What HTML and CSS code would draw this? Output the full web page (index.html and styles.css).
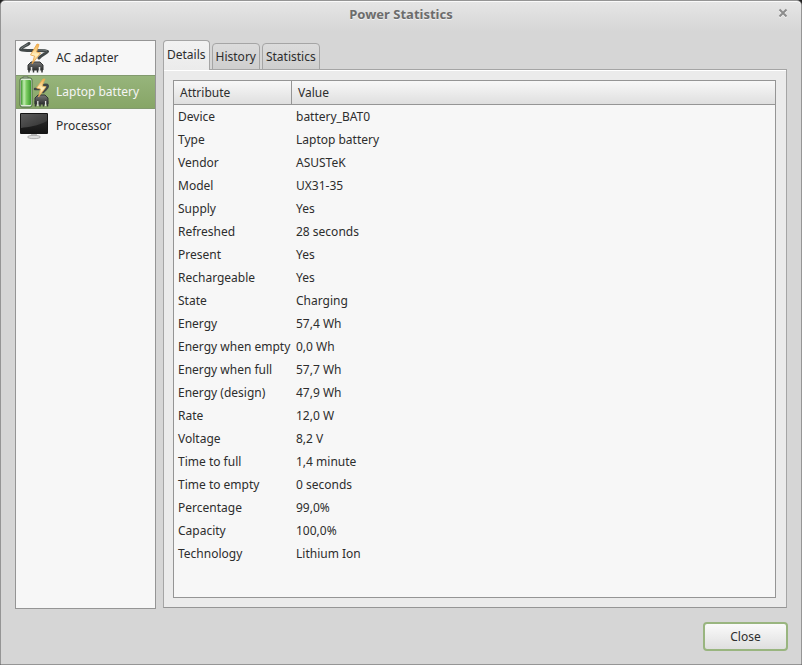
FILE: index.html
```html
<!DOCTYPE html>
<html lang="en">
<head>
<meta charset="utf-8">
<title>Power Statistics</title>
<link rel="stylesheet" href="styles.css">
</head>
<body>
<svg class="defs" aria-hidden="true">
  <defs>
    <linearGradient id="bolt" x1="0" y1="0" x2="0" y2="1"><stop offset="0" stop-color="#f3ae48"/><stop offset=".55" stop-color="#fff0c0"/><stop offset="1" stop-color="#f0a840"/></linearGradient>
    <linearGradient id="plug" x1="0" y1="0" x2="0" y2="1"><stop offset="0" stop-color="#777"/><stop offset="1" stop-color="#303232"/></linearGradient>
    <linearGradient id="cell" x1="0" y1="0" x2="1" y2="0"><stop offset="0" stop-color="#3f9a30"/><stop offset=".3" stop-color="#c0ecae"/><stop offset=".55" stop-color="#7ccb62"/><stop offset="1" stop-color="#3b9a2c"/></linearGradient>
    <linearGradient id="screen" x1="0" y1="0" x2="0" y2="1"><stop offset="0" stop-color="#303030"/><stop offset="1" stop-color="#151515"/></linearGradient>
    <linearGradient id="glare" x1="0" y1="0" x2="1" y2="1"><stop offset="0" stop-color="#5c5c5c"/><stop offset="1" stop-color="#303030"/></linearGradient>
  </defs>
</svg>
<main class="window">
  <header class="titlebar">
    <h1 class="title">Power Statistics</h1>
    <button class="window-close" type="button" aria-label="Close window">
      <svg width="10" height="10" viewBox="0 0 10 10"><path class="cross-light" d="M1.5 2.5l7 7m0-7l-7 7"/><path class="cross" d="M1.5 1.5l7 7m0-7l-7 7"/></svg>
    </button>
  </header>
  <div class="content">
    <nav class="devices" aria-label="Devices">
      <button class="device" type="button">
        <svg class="icon" viewBox="0 0 32 32">
          <path d="M11 1.5C8 4 3 5 2.500 7.500C7 9 12 8.500 17 8.500S27 8 29.500 9.500C28 12 24 12.500 21 16" fill="none" stroke="#434949" stroke-width="3" stroke-linecap="round" stroke-linejoin="round"/>
          <path d="M10 2C7 4 4 5 3 7M19 8c4 0 8 0 10 1" fill="none" stroke="#7f8686" stroke-width=".8"/>
          <path d="M10 23l3-3h9l3 3v5H10z" fill="url(#plug)" stroke="#343737"/>
          <path d="M11 26v4.500m4.500-4v4m4-4v4M24 26v4.500" fill="none" stroke="#343737" stroke-width="1.500"/>
          <path d="M13.500 25v4.500m8-4.500v4.500" stroke="#e2e2e2" stroke-width="1.500"/>
          <path d="M19 2l-6.500 11 4 1-2.500 8L22.500 11l-4-1L21 2.500z" fill="url(#bolt)" stroke="#e9a345" stroke-width=".8"/>
        </svg>
        <span>AC adapter</span>
      </button>
      <button class="device selected" type="button" aria-current="true">
        <svg class="icon" viewBox="0 0 32 32">
          <path d="M5 3V.8h5V3" fill="#e2ebdd" stroke="#5d6b55" stroke-width=".8"/>
          <rect x="2" y="2" width="12" height="29" rx="2" fill="#dcebd5" stroke="#4d6644"/>
          <rect x="3" y="4" width="10" height="25" rx="1" fill="url(#cell)"/>
          <path d="M26 9c4-1 5 1 2 4l-3 3M17 13h5" fill="none" stroke="#424747" stroke-width="2.500" stroke-linecap="round"/>
          <path d="M17 22l3-3h7l3 3v6H17z" fill="url(#plug)" stroke="#343737"/>
          <path d="M17.500 25v5.500m4.500-4v4m3.500-4v4m4-5.500v5.500" fill="none" stroke="#343737" stroke-width="1.500"/>
          <path d="M19.800 25v5m7.800-5v5" stroke="#e2e2e2" stroke-width="1.300"/>
          <path d="M25 3l-6.500 9 4 1-2 8 7.500-10-4-1 3-7z" fill="url(#bolt)" stroke="#e7ad58" stroke-width=".8"/>
        </svg>
        <span>Laptop battery</span>
      </button>
      <button class="device" type="button">
        <svg class="icon" viewBox="0 0 32 32">
          <path d="M13 24h6v3h-6z" fill="#bbb"/>
          <ellipse cx="16" cy="27" rx="6.500" ry="1.700" fill="#ddd" stroke="#999" stroke-width=".7"/>
          <rect x="2" y="3" width="28" height="21" rx="1" fill="#151515"/>
          <rect x="3" y="4" width="26" height="19" fill="url(#screen)"/>
          <path d="M3 4h26v7C20 16 10 17 3 18z" fill="url(#glare)"/>
        </svg>
        <span>Processor</span>
      </button>
    </nav>
    <section class="notebook">
      <div class="tabs" role="tablist">
        <button class="tab active" type="button" role="tab" aria-selected="true">Details</button>
        <button class="tab" type="button" role="tab" aria-selected="false">History</button>
        <button class="tab" type="button" role="tab" aria-selected="false">Statistics</button>
      </div>
      <div class="panel" role="tabpanel">
        <div class="table-frame">
          <table class="details">
            <thead><tr><th scope="col" class="attribute">Attribute</th><th scope="col">Value</th></tr></thead>
            <tbody>
              <tr><td>Device</td><td>battery_BAT0</td></tr>
              <tr><td>Type</td><td>Laptop battery</td></tr>
              <tr><td>Vendor</td><td>ASUSTeK</td></tr>
              <tr><td>Model</td><td>UX31-35</td></tr>
              <tr><td>Supply</td><td>Yes</td></tr>
              <tr><td>Refreshed</td><td>28 seconds</td></tr>
              <tr><td>Present</td><td>Yes</td></tr>
              <tr><td>Rechargeable</td><td>Yes</td></tr>
              <tr><td>State</td><td>Charging</td></tr>
              <tr><td>Energy</td><td>57,4 Wh</td></tr>
              <tr><td>Energy when empty</td><td>0,0 Wh</td></tr>
              <tr><td>Energy when full</td><td>57,7 Wh</td></tr>
              <tr><td>Energy (design)</td><td>47,9 Wh</td></tr>
              <tr><td>Rate</td><td>12,0 W</td></tr>
              <tr><td>Voltage</td><td>8,2 V</td></tr>
              <tr><td>Time to full</td><td>1,4 minute</td></tr>
              <tr><td>Time to empty</td><td>0 seconds</td></tr>
              <tr><td>Percentage</td><td>99,0%</td></tr>
              <tr><td>Capacity</td><td>100,0%</td></tr>
              <tr><td>Technology</td><td>Lithium Ion</td></tr>
            </tbody>
          </table>
        </div>
      </div>
    </section>
  </div>
  <footer class="actions"><button class="close" type="button">Close</button></footer>
</main>
</body>
</html>
```
FILE: styles.css
```css
* { box-sizing: border-box; }

body {
  margin: 0;
  background: #222;
  color: #2d2d2d;
  font: 12px/22px "Noto Sans", sans-serif;
}

button {
  margin: 0;
  padding: 0;
  border: 0;
  background: none;
  color: inherit;
  font: inherit;
}

.defs { position: absolute; width: 0; height: 0; }

.window {
  display: flex;
  flex-direction: column;
  min-height: 100vh;
  border: 1px solid #959595;
  border-radius: 5px 5px 0 0;
  background: linear-gradient(#e6e6e6, #d6d6d6 30px);
  box-shadow: inset 0 1px #fafafa;
}

.titlebar {
  display: grid;
  grid-template-columns: 1fr auto 1fr;
  align-items: center;
  height: 29px;
  padding: 0 13px 3px;
}

.title {
  grid-column: 2;
  margin: 0;
  color: #6c6c6c;
  font-size: 13px;
  font-weight: 700;
  text-shadow: 0 1px #f0f0f0;
}

.window-close {
  display: flex;
  justify-self: end;
  padding-bottom: 2px;
}

.window-close path { fill: none; stroke-width: 2; }
.window-close .cross { stroke: #8c8c8c; }
.window-close .cross-light { stroke: #f4f4f4; }

.content {
  display: flex;
  flex: 1;
  gap: 7px;
  padding: 10px 14px 0;
}

.devices {
  flex: none;
  width: 141px;
  border: 1px solid #959595;
  background: #f7f7f7;
}

.device {
  display: flex;
  align-items: center;
  gap: 6px;
  width: 100%;
  height: 34px;
  padding-left: 2px;
  text-align: left;
}

.device.selected {
  background: linear-gradient(#97b57c, #86a566);
  box-shadow: inset 0 1px #829a6e, inset 0 -1px #829a6e;
  color: #f5f5f5;
}

.icon { width: 32px; height: 32px; }

.notebook {
  display: flex;
  flex: 1;
  flex-direction: column;
  padding-bottom: 1px;
}

.tabs {
  display: flex;
  align-items: flex-end;
  gap: 2px;
  height: 30px;
  margin-bottom: -1px;
}

.tab {
  height: 27px;
  padding: 0 3px;
  border: 1px solid #a5a5a5;
  border-radius: 4px 4px 0 0;
  background: linear-gradient(#dcdcdc, #cecece);
}

.tab.active {
  position: relative;
  height: 30px;
  padding-bottom: 1px;
  border-bottom: 0;
  background: linear-gradient(#f2f2f2, #ebebeb);
}

.panel {
  display: flex;
  flex: 1;
  padding: 10px 10px 9px 9px;
  border: 1px solid #a5a5a5;
  border-bottom-color: #959595;
  background: #ebebeb;
  box-shadow: inset 0 1px #fff;
}

.table-frame {
  flex: 1;
  border: 1px solid #959595;
  background: #f7f7f7;
}

.details {
  width: 100%;
  border-collapse: separate;
  border-spacing: 0;
  table-layout: fixed;
}

.details th {
  height: 24px;
  padding: 0 6px;
  border-bottom: 1px solid #959595;
  background: linear-gradient(#f8f8f8, #dfdfdf);
  font-weight: 400;
  text-align: left;
}

.details .attribute {
  width: 118px;
  border-right: 1px solid #959595;
}

.details td {
  height: 23px;
  padding: 0 0 0 4px;
  white-space: nowrap;
}

.actions {
  display: flex;
  justify-content: flex-end;
  padding: 13px;
}

.close {
  width: 85px;
  height: 29px;
  border: 2px solid #99b57f;
  border-radius: 4px;
  background: linear-gradient(#fafafa, #dfdfdf);
}
```
